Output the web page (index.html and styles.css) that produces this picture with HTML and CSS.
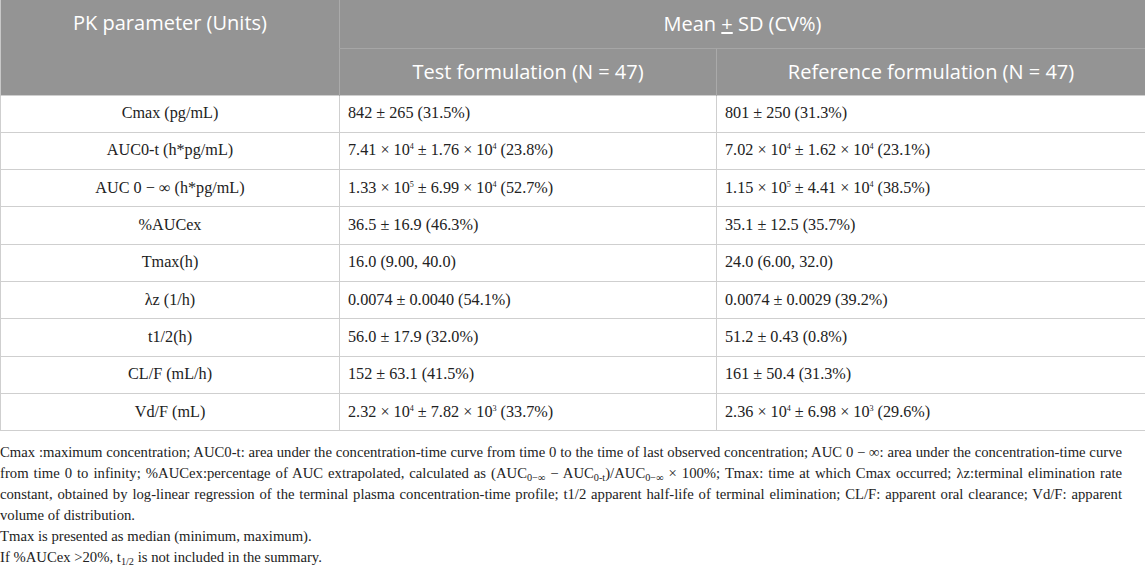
FILE: index.html
```html
<!DOCTYPE html>
<html>
<head>
<meta charset="utf-8">
<link rel="stylesheet" href="styles.css">
</head>
<body>
<table class="pk">
  <colgroup>
    <col class="c1"><col class="c2"><col class="c3">
  </colgroup>
  <thead>
    <tr class="h1">
      <th rowspan="2" class="hp">PK parameter (Units)</th>
      <th colspan="2" class="hm">Mean <u>+</u> SD (CV%)</th>
    </tr>
    <tr class="h2">
      <th class="hs">Test formulation (N = 47)</th>
      <th class="hs">Reference formulation (N = 47)</th>
    </tr>
  </thead>
  <tbody>
    <tr><td class="p">Cmax (pg/mL)</td><td>842 ± 265 (31.5%)</td><td>801 ± 250 (31.3%)</td></tr>
    <tr><td class="p">AUC0-t (h*pg/mL)</td><td>7.41 × 10<sup>4</sup> ± 1.76 × 10<sup>4</sup> (23.8%)</td><td>7.02 × 10<sup>4</sup> ± 1.62 × 10<sup>4</sup> (23.1%)</td></tr>
    <tr><td class="p">AUC 0 − ∞ (h*pg/mL)</td><td>1.33 × 10<sup>5</sup> ± 6.99 × 10<sup>4</sup> (52.7%)</td><td>1.15 × 10<sup>5</sup> ± 4.41 × 10<sup>4</sup> (38.5%)</td></tr>
    <tr><td class="p">%AUCex</td><td>36.5 ± 16.9 (46.3%)</td><td>35.1 ± 12.5 (35.7%)</td></tr>
    <tr><td class="p">Tmax(h)</td><td>16.0 (9.00, 40.0)</td><td>24.0 (6.00, 32.0)</td></tr>
    <tr><td class="p">λz (1/h)</td><td>0.0074 ± 0.0040 (54.1%)</td><td>0.0074 ± 0.0029 (39.2%)</td></tr>
    <tr><td class="p">t1/2(h)</td><td>56.0 ± 17.9 (32.0%)</td><td>51.2 ± 0.43 (0.8%)</td></tr>
    <tr><td class="p">CL/F (mL/h)</td><td>152 ± 63.1 (41.5%)</td><td>161 ± 50.4 (31.3%)</td></tr>
    <tr><td class="p">Vd/F (mL)</td><td>2.32 × 10<sup>4</sup> ± 7.82 × 10<sup>3</sup> (33.7%)</td><td>2.36 × 10<sup>4</sup> ± 6.98 × 10<sup>3</sup> (29.6%)</td></tr>
  </tbody>
</table>
<div class="notes">
  <p class="j">Cmax :maximum concentration; AUC0-t: area under the concentration-time curve from time 0 to the time of last observed concentration; AUC 0 − ∞: area under the concentration-time curve from time 0 to infinity; %AUCex:percentage of AUC extrapolated, calculated as (AUC<sub>0−∞</sub> − AUC<sub>0-t</sub>)/AUC<sub>0−∞</sub> × 100%; Tmax: time at which Cmax occurred; λz:terminal elimination rate constant, obtained by log-linear regression of the terminal plasma concentration-time profile; t1/2 apparent half-life of terminal elimination; CL/F: apparent oral clearance; Vd/F: apparent volume of distribution.</p>
  <p>Tmax is presented as median (minimum, maximum).</p>
  <p>If %AUCex &gt;20%, t<sub>1/2</sub> is not included in the summary.</p>
</div>
</body>
</html>
```
FILE: styles.css
```css
html, body {
  margin: 0;
  padding: 0;
  background: #ffffff;
}

.pk {
  width: 1145px;
  border-collapse: collapse;
  table-layout: fixed;
  font-family: "Liberation Serif", "Times New Roman", serif;
  font-size: 16.2px;
  color: #222;
}

.c1 { width: 339px; }
.c2 { width: 377px; }
.c3 { width: 429px; }

.pk th {
  background: #949494;
  color: #ffffff;
  font-family: "Open Sans", "Noto Sans", sans-serif;
  font-weight: 400;
  font-size: 20px;
  text-align: center;
  padding: 0;
}

.h1 { height: 48px; }
.h2 { height: 47px; }

.hp {
  vertical-align: top;
  padding-top: 9px !important;
  line-height: 28px;
  border-left: 1px solid #c8c8c8;
}

.hm {
  border-left: 1px solid #aaaaaa;
  border-bottom: 1px solid #a6a6a6;
  border-right: 1px solid #c8c8c8;
}

.hs {
  border-left: 1px solid #aaaaaa;
}

.hs:last-child {
  border-right: 1px solid #c8c8c8;
}

.pk tbody tr { height: 37.3px; }

.pk td {
  border: 1px solid #cfcfcf;
  padding: 0 8px;
  vertical-align: middle;
  white-space: nowrap;
}

.pk td.p { text-align: center; }

.pk sup {
  font-size: 0.5em;
  vertical-align: 0.75em;
  line-height: 0;
}

.notes {
  width: 1122px;
  margin-top: 11px;
  font-family: "Liberation Serif", "Times New Roman", serif;
  font-size: 14.7px;
  line-height: 21px;
  color: #222;
}

.notes p { margin: 0; }

.notes .j { text-align: justify; }

.notes sub {
  font-size: 0.7em;
  vertical-align: -0.25em;
  line-height: 0;
}
```
